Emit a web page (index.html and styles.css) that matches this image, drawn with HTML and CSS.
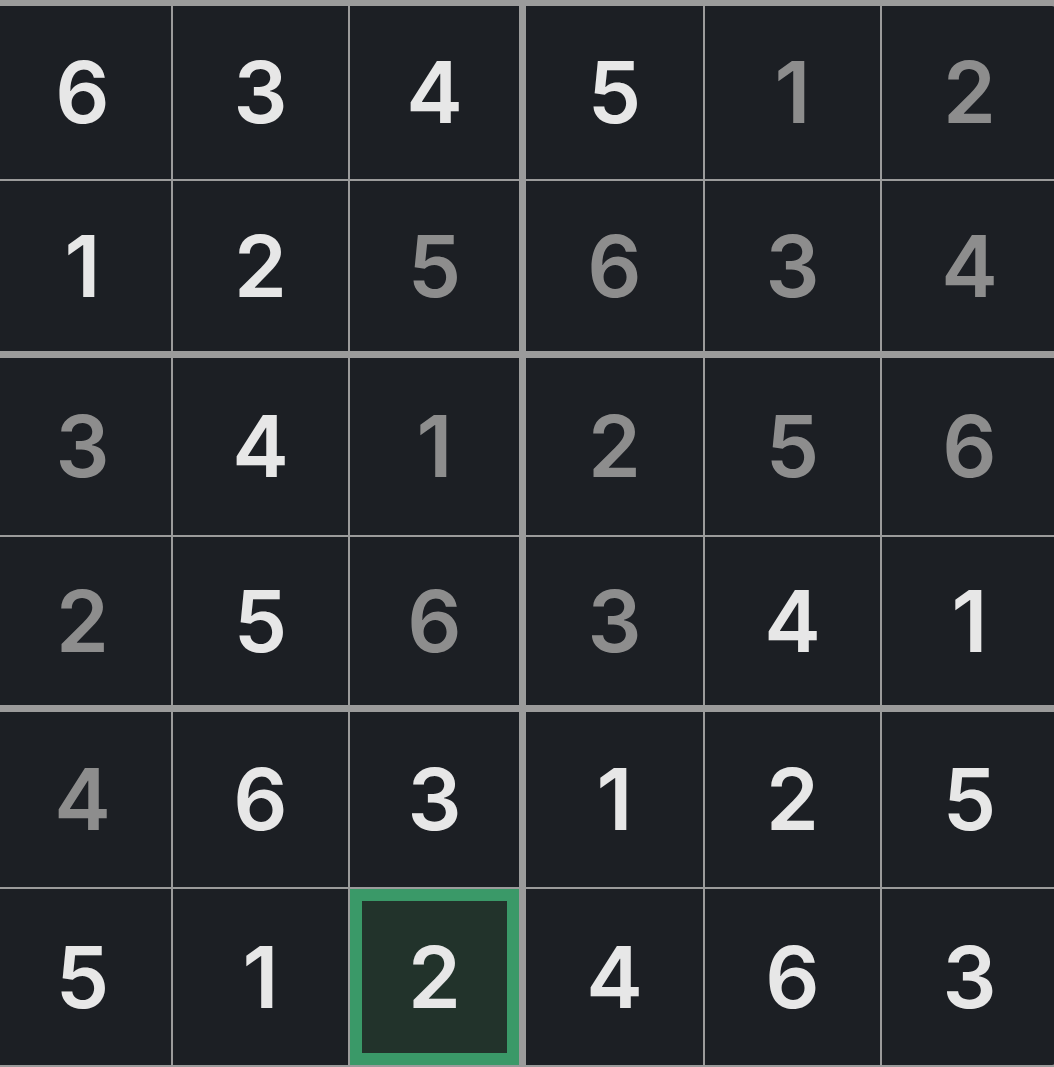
FILE: index.html
```html
<!DOCTYPE html>
<html lang="en">
<head>
<meta charset="utf-8">
<title>Sudoku 6x6</title>
<link rel="stylesheet" href="styles.css">
</head>
<body>
<div class="board">
  <div class="cell given tl">6</div>
  <div class="cell given">3</div>
  <div class="cell given box-r">4</div>
  <div class="cell given">5</div>
  <div class="cell">1</div>
  <div class="cell tr">2</div>

  <div class="cell given box-b">1</div>
  <div class="cell given box-b">2</div>
  <div class="cell box-r box-b">5</div>
  <div class="cell box-b">6</div>
  <div class="cell box-b">3</div>
  <div class="cell box-b">4</div>

  <div class="cell">3</div>
  <div class="cell given">4</div>
  <div class="cell box-r">1</div>
  <div class="cell">2</div>
  <div class="cell">5</div>
  <div class="cell">6</div>

  <div class="cell box-b">2</div>
  <div class="cell given box-b">5</div>
  <div class="cell box-r box-b">6</div>
  <div class="cell box-b">3</div>
  <div class="cell given box-b">4</div>
  <div class="cell given box-b">1</div>

  <div class="cell">4</div>
  <div class="cell given">6</div>
  <div class="cell given box-r">3</div>
  <div class="cell given">1</div>
  <div class="cell given">2</div>
  <div class="cell given">5</div>

  <div class="cell given bl">5</div>
  <div class="cell given">1</div>
  <div class="cell given box-r selected">2</div>
  <div class="cell given">4</div>
  <div class="cell given">6</div>
  <div class="cell given br">3</div>
</div>
</body>
</html>
```

FILE: styles.css
```css
html, body {
  margin: 0;
  padding: 0;
  background: #1c1f24;
  overflow: hidden;
  width: 1054px;
  height: 1067px;
}

.board {
  display: grid;
  grid-template-columns: 177px 175px 174px 177px 175px 175px;
  grid-template-rows: 173px 175px 177px 173px 175px 176px;
  gap: 2px;
  padding: 6px;
  margin-left: -12px;
  width: max-content;
  background: #9b9b9b;
  border-radius: 10px;
}

.cell {
  box-sizing: border-box;
  display: flex;
  align-items: center;
  justify-content: center;
  background: #1c1f24;
  color: #8d8d8d;
  font-family: "Inter", "Liberation Sans", sans-serif;
  font-weight: 600;
  font-size: 85px;
  line-height: 1;
}

.cell.given {
  color: #e7e7e7;
}

.cell.box-r {
  border-right: 5px solid #9b9b9b;
}

.cell.box-b {
  border-bottom: 5px solid #9b9b9b;
}

.cell.selected {
  background: #22332b;
  box-shadow: inset 0 0 0 12px #3a9968;
}

.tl { border-top-left-radius: 5px; }
.tr { border-top-right-radius: 5px; }
.bl { border-bottom-left-radius: 5px; }
.br { border-bottom-right-radius: 5px; }
```
